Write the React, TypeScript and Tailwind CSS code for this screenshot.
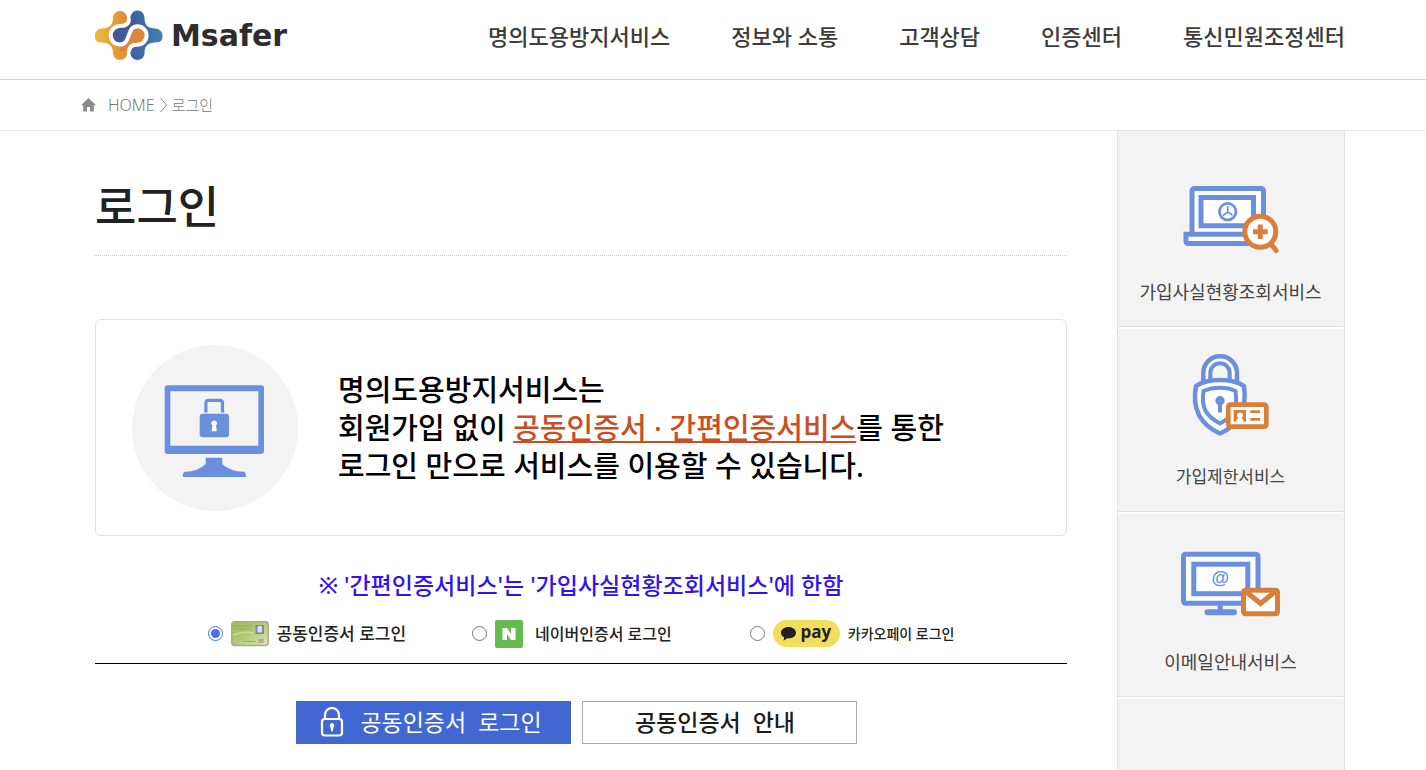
import React, { useState } from 'react';

const NAV_ITEMS = ['명의도용방지서비스', '정보와 소통', '고객상담', '인증센터', '통신민원조정센터'];

const Logo = () => (
    <a href="#" className="flex items-center gap-2 text-[#2e2c2d]">
        <svg width="68" height="51" viewBox="0 0 68 51" fill="none">
            <defs>
                <linearGradient id="logoOrange" x1="0" y1="0" x2="1" y2="0">
                    <stop offset="0" stopColor="#ecb93c" />
                    <stop offset="1" stopColor="#dc8a38" />
                </linearGradient>
                <linearGradient id="logoBlue" x1="0" y1="0" x2="1" y2="0">
                    <stop offset="0" stopColor="#3d5f9c" />
                    <stop offset="1" stopColor="#4180b3" />
                </linearGradient>
            </defs>
            <path
                fill="url(#logoOrange)"
                d="M25 1C29 1 32 4 32 8Q32 11 34 13V38Q32 40 32 43C32 47 29 50 25 50S18 47 18 43C18 36 14 32.500 7 32.500S0 29.500 0 25.500S3 18.500 7 18.500C14 18.500 18 15 18 8C18 4 21 1 25 1Z"
            />
            <path
                fill="url(#logoBlue)"
                d="M42.500 .5C38.500 .5 35.500 4 35.500 8Q35.500 11 34 13V38Q35.500 40 35.500 43C35.500 47 38.500 50 42.500 50S49.500 47 49.500 43C49.500 36 53 32.500 60 32.500S67.500 29.500 67.500 25.500S64 18.500 60 18.500C53 18.500 49.500 15 49.500 8C49.500 4 46.500 .5 42.500 .5Z"
            />
            <path fill="#3f5b9b" d="M34 10Q34 16 25 16A9.300 9.300 0 0 0 25 34.600C36 34.600 31.500 16.200 42.300 16.200V10Z" />
            <path fill="#dc8637" d="M34 41Q34 34.800 42.300 34.800A9.300 9.300 0 0 0 42.300 16.200C31.500 16.200 36 34.600 25 34.600V41Z" />
            <path
                d="M34 9Q34 16 25 16A9.300 9.300 0 0 0 25 34.600C36 34.600 31.500 16.200 42.300 16.200A9.300 9.300 0 0 1 42.300 34.800Q34 34.800 34 42"
                stroke="#fff"
                strokeWidth="4"
            />
        </svg>
        <span className="font-['DejaVu_Sans',sans-serif] text-[30px] leading-9 font-bold">Msafer</span>
    </a>
);

const LaptopSearchIcon = () => (
    <svg width="100" height="88" viewBox="0 0 100 88" fill="none" stroke="#6a90dd" strokeWidth="5">
        <path d="M11 65V22.500Q11 19.500 14 19.500H79.500Q82.500 19.500 82.500 22.500V65" fill="#fff" />
        <path d="M5 65.200H90V74.500H7.500Q5 74.500 5 72Z" fill="#fff" />
        <path d="M20 28.500H72.500V56.800H20Z" fill="#fff" />
        <circle cx="46.700" cy="42.700" r="8.300" strokeWidth="2.700" />
        <path d="M46.700 37V43L42 46.500M46.700 43L51.500 46" strokeWidth="1.600" />
        <path d="M90 75L95 81.500" stroke="#da7f3a" strokeLinecap="round" />
        <circle cx="79.300" cy="62.700" r="15.500" fill="#fff" stroke="#da7f3a" />
        <path d="M72 62.700H86.700M79.300 55.500V70" stroke="#da7f3a" />
    </svg>
);

const LockCardIcon = () => (
    <svg width="100" height="88" viewBox="0 0 100 88" fill="none" stroke="#6a90dd" strokeWidth="4.500">
        <path d="M22.300 29V19A16.800 16.800 0 0 1 56 19V29Z" fill="#fff" />
        <path d="M29.300 29V19A9.700 9.700 0 0 1 48.700 19V29Z" fill="#f3f3f3" strokeWidth="4" />
        <path d="M39 26Q54 26 63 32C66 54 60 70 39 79.500C18 70 11 54 15 32Q24 26 39 26Z" fill="#fff" strokeLinejoin="round" />
        <path d="M39 33.800Q48 33.800 54.500 37C57 54 53 62 39 69.500C25 62 20 54 22.500 37Q30 33.800 39 33.800Z" fill="#fff" strokeWidth="4" />
        <circle cx="39" cy="46.700" r="4.700" fill="#6a90dd" stroke="none" />
        <path d="M39 47V58.500" strokeWidth="4" />
        <rect x="47.300" y="50.700" width="38" height="22" rx="2" fill="#fff" stroke="#da7f3a" strokeWidth="4.700" />
        <path
            fill="#da7f3a"
            stroke="none"
            d="M52.700 56H65V67.700H62.500Q62.500 65 60.500 64.300Q62 63 62 61Q62 58.500 59 58.500T56 61Q56 63 57.300 64.300Q55.200 65 55.200 67.700H52.700Z"
        />
        <path d="M69.300 57.700H79M69.300 65.300H79" stroke="#da7f3a" strokeWidth="2.700" />
    </svg>
);

const MonitorMailIcon = () => (
    <svg width="100" height="88" viewBox="0 0 100 88" fill="none" stroke="#6a90dd" strokeWidth="5">
        <rect x="2.500" y="15.200" width="74.500" height="49" rx="2" fill="#fff" />
        <rect x="12.800" y="25.200" width="54" height="29.500" fill="#fff" />
        <path d="M39.300 64V73" />
        <path d="M26.500 73.200H53" strokeWidth="6" strokeLinecap="round" />
        <text
            x="39.300"
            y="44.500"
            textAnchor="middle"
            fill="#6a90dd"
            stroke="none"
            className="font-['Liberation_Sans',sans-serif] text-[18px] font-bold"
        >
            @
        </text>
        <rect x="62.500" y="51.200" width="34" height="23.600" rx="2" fill="#fff" stroke="#da7f3a" />
        <path d="M63.500 51.500L79.500 64.500L95.500 51.500" stroke="#da7f3a" />
    </svg>
);

const MonitorLockIcon = () => (
    <svg width="166" height="166" viewBox="0 0 166 166" fill="#6a90dd" className="shrink-0">
        <circle cx="83" cy="83" r="83" fill="#f3f3f3" />
        <path
            fillRule="evenodd"
            d="M35.700 40.300H129Q132 40.300 132 43.300V106Q132 109 129 109H35.700Q32.700 109 32.700 106V43.300Q32.700 40.300 35.700 40.300ZM38.300 46.300V100.700H126.300V46.300Z"
        />
        <path d="M73.700 112.700H90.300V119Q98 126.500 112 126.700Q114 127 114 132H50.700Q50.700 127 53 126.700Q66 126.500 73.700 119Z" />
        <path d="M73.900 67.500V58Q73.900 55.300 76.600 55.300H87.800Q90.500 55.300 90.500 58V67.500" fill="none" stroke="#6a90dd" strokeWidth="3.200" />
        <rect x="67.700" y="68.700" width="29.300" height="23.600" rx="3" />
        <path d="M82.200 75.500A2.800 2.800 0 0 1 84 80.500L84.800 86.200H79.600L80.400 80.500A2.800 2.800 0 0 1 82.200 75.500Z" fill="#fff" />
    </svg>
);

const CertificateIcon = () => (
    <svg width="38" height="26" viewBox="0 0 38 26">
        <defs>
            <linearGradient id="cardGreen" x1="0" y1="0" x2="1" y2="1">
                <stop offset="0" stopColor="#a3b85c" />
                <stop offset="0.5" stopColor="#b4c978" />
                <stop offset="1" stopColor="#dfe6bd" />
            </linearGradient>
        </defs>
        <rect x=".8" y=".8" width="36.400" height="23.800" rx="3" fill="url(#cardGreen)" stroke="#a5ad86" strokeWidth="1.500" />
        <path d="M3 5H20M3 8H20M12 20.500H25" stroke="#95a95c" strokeWidth=".8" />
        <path d="M2 14Q12 10 23 12" stroke="#c9d99a" strokeWidth="1.500" fill="none" />
        <rect x="24.500" y="4" width="8.500" height="9" fill="#8188a0" />
        <rect x="26.500" y="5" width="4.500" height="6.500" rx="1.500" fill="#dfe2f5" />
        <rect x="27.500" y="18" width="5" height="4" fill="#bda77a" />
    </svg>
);

const NaverIcon = () => (
    <svg width="28" height="28" viewBox="0 0 28 28">
        <rect width="28" height="28" rx="2" fill="#65bb4e" />
        <path d="M7.500 8H12L16 14V8H20.500V20H16L12 14V20H7.500Z" fill="#fff" />
    </svg>
);

const KakaoPayIcon = () => (
    <span className="flex h-[27px] w-[67px] items-center justify-center gap-1 rounded-full bg-[#f1de5d] text-[#241f20]">
        <svg width="15" height="14" viewBox="0 0 15 14" fill="currentColor">
            <path d="M7.500 0C3.300 0 0 2.500 0 5.700C0 7.700 1.300 9.400 3.200 10.400L2.500 13.700L6.400 11.300C11.500 11.800 15 9.200 15 5.700C15 2.500 11.700 0 7.500 0Z" />
        </svg>
        <span className="pb-1 font-['Open_Sans',sans-serif] text-[17px] leading-5 font-bold">pay</span>
    </span>
);

const LOGIN_METHODS = [
    { id: 'joint', label: '공동인증서 로그인', icon: <CertificateIcon />, className: 'gap-2 text-[17px]' },
    { id: 'naver', label: '네이버인증서 로그인', icon: <NaverIcon />, className: 'gap-3 pr-3 text-[16px]' },
    { id: 'kakao', label: '카카오페이 로그인', icon: <KakaoPayIcon />, className: 'gap-2 text-[14px]' },
];

const QUICK_LINKS = [
    { label: '가입사실현황조회서비스', icon: <LaptopSearchIcon />, className: 'pt-[38px] text-[18px]' },
    { label: '가입제한서비스', icon: <LockCardIcon />, className: 'pt-[27px] text-[17px]' },
    { label: '이메일안내서비스', icon: <MonitorMailIcon />, className: 'pt-[27px] text-[18px]' },
];

export default function App() {
    const [method, setMethod] = useState('joint');

    return (
        <div className="flex min-h-screen flex-col bg-white font-['Noto_Sans','Noto_Sans_CJK_KR',sans-serif] text-black">
            {/* Header */}
            <header className="flex h-20 items-center justify-between border-b border-[#d4d4d4] pr-[81px] pb-2 pl-[95px]">
                <Logo />
                <nav className="flex gap-[61px] text-[22px] leading-8 font-medium whitespace-nowrap text-[#3c3c3c]">
                    {NAV_ITEMS.map(item => (
                        <a key={item} href="#">{item}</a>
                    ))}
                </nav>
            </header>

            {/* Breadcrumb */}
            <div className="flex h-[51px] items-center border-b border-[#e3e3e3] pl-[81px] text-[16px] font-light text-[#777]">
                <svg width="15" height="14" viewBox="0 0 15 14" fill="#8a8a8a" className="mr-3">
                    <path d="M7.500 0L15 7.300H12.800V13.500H9V9H6V13.500H2.200V7.300H0Z" />
                </svg>
                <a href="#">HOME</a>
                <svg width="9" height="16" viewBox="0 0 9 16" fill="none" stroke="#888" className="mx-1">
                    <path d="M1.500 1L7.500 8L1.500 15" />
                </svg>
                <span className="text-[15px]">로그인</span>
            </div>

            <div className="flex flex-1 gap-[50px] pr-[81px] pl-[95px]">
                <main className="min-w-0 flex-1">
                    <h1 className="border-b border-dotted border-[#ccc] pt-11 pb-4 text-[45px] leading-[64px] font-medium text-[#222]">로그인</h1>

                    <section className="mt-[63px] flex h-[217px] items-center gap-10 rounded-md border border-[#e0e0e0] px-9">
                        <MonitorLockIcon />
                        <p className="text-[29px] leading-[38px] font-medium whitespace-nowrap">
                            명의도용방지서비스는
                            <br />
                            회원가입 없이 <a href="#" className="text-[#cb4d23] underline">공동인증서 · 간편인증서비스</a>를 통한
                            <br />
                            로그인 만으로 서비스를 이용할 수 있습니다.
                        </p>
                    </section>

                    <p className="mt-[30px] text-center text-[23px] leading-[38px] font-medium text-[#3213f0]">
                        ※ '간편인증서비스'는 '가입사실현황조회서비스'에 한함
                    </p>

                    <div className="flex h-[60px] items-center justify-center gap-[66px] border-b border-black">
                        {LOGIN_METHODS.map(item => (
                            <label key={item.id} className={`flex items-center font-medium whitespace-nowrap text-[#222] ${item.className}`}>
                                <span className="flex items-center gap-2">
                                    <input
                                        type="radio"
                                        name="loginMethod"
                                        className="size-[15px] accent-[#4273fa]"
                                        checked={method === item.id}
                                        onChange={() => setMethod(item.id)}
                                    />
                                    {item.icon}
                                </span>
                                {item.label}
                            </label>
                        ))}
                    </div>

                    <div className="mt-[37px] flex justify-center gap-[11px] pr-[10px] pb-6 text-[23px] leading-8 font-medium">
                        <button className="flex h-[43px] w-[275px] items-center justify-center gap-4 bg-[#4267d2] pr-1 pb-px font-normal whitespace-pre text-white">
                            <svg width="24" height="30" viewBox="0 0 24 30" fill="none" stroke="#fff" strokeWidth="2.200">
                                <path d="M5 12V8A7 7 0 0 1 19 8V12" />
                                <rect x="2" y="12" width="20" height="16.500" rx="3" />
                                <path d="M12 16A2.500 2.500 0 0 1 13.500 20.300L12.700 24.500H11.300L10.500 20.300A2.500 2.500 0 0 1 12 16Z" fill="#fff" stroke="none" />
                            </svg>
                            {'공동인증서  로그인'}
                        </button>
                        <button className="h-[43px] w-[275px] border border-[#aaa] bg-white pr-2 pb-px whitespace-pre text-[#1c1c1c]">
                            {'공동인증서  안내'}
                        </button>
                    </div>
                </main>

                {/* Quick links */}
                <aside className="w-[228px] shrink-0 border-x border-[#e0e0e0] bg-[#f3f3f3] pr-px text-[#444]">
                    {QUICK_LINKS.map(link => (
                        <a
                            key={link.label}
                            href="#"
                            className={`flex flex-col items-center border-b border-[#e0e0e0] pb-[19px] whitespace-nowrap shadow-[0_2px_0_#fff] ${link.className}`}
                        >
                            {link.icon}
                            <span className="mt-5 leading-[30px]">{link.label}</span>
                        </a>
                    ))}
                </aside>
            </div>
        </div>
    );
}
